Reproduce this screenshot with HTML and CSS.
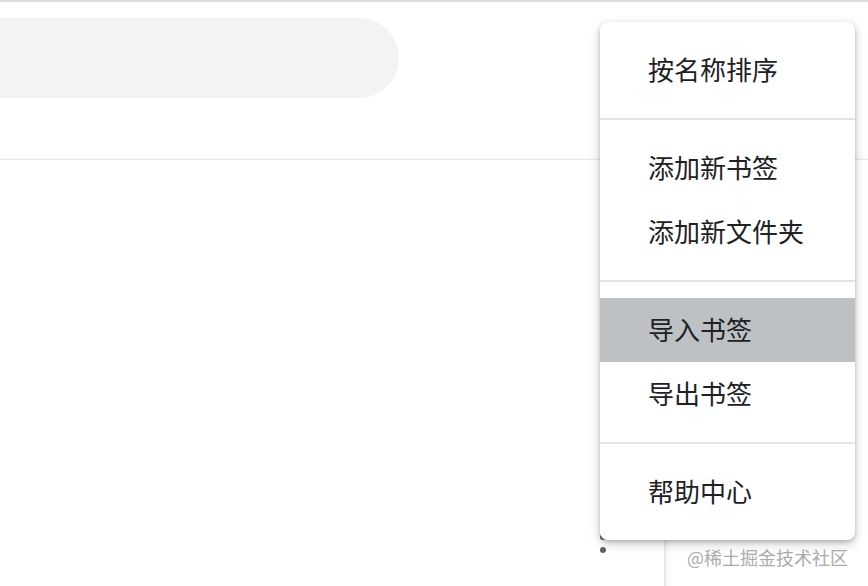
FILE: index.html
```html
<!DOCTYPE html>
<html lang="zh-CN">
<head>
<meta charset="utf-8">
<link rel="stylesheet" href="styles.css">
</head>
<body>
<div class="topline"></div>
<header class="header">
  <div class="search"></div>
</header>
<main class="content"></main>

<div class="kebab">
  <span class="dot"></span>
  <span class="dot"></span>
  <span class="dot"></span>
</div>
<div class="sidepanel"></div>

<div class="menu">
  <div class="section">
    <div class="item">按名称排序</div>
  </div>
  <div class="section">
    <div class="item">添加新书签</div>
    <div class="item">添加新文件夹</div>
  </div>
  <div class="section">
    <div class="item active">导入书签</div>
    <div class="item">导出书签</div>
  </div>
  <div class="section">
    <div class="item">帮助中心</div>
  </div>
</div>

<div class="watermark">@稀土掘金技术社区</div>
</body>
</html>
```
FILE: styles.css
```css
html, body {
  margin: 0;
  padding: 0;
  background: #ffffff;
  width: 868px;
  height: 586px;
  overflow: hidden;
  font-family: "Noto Sans CJK SC", "Noto Sans", sans-serif;
  position: relative;
}

.topline {
  height: 2px;
  background: #dadce0;
}

.header {
  height: 158px;
  padding-top: 16px;
  box-sizing: border-box;
  border-bottom: 1px solid #e6e8ea;
  box-shadow: inset 0 -8px 8px -8px rgba(0, 0, 0, 0.05);
}

.search {
  width: 440px;
  height: 80px;
  margin-left: -41px;
  border-radius: 40px;
  background: #f1f3f4;
}

.content {
  height: 400px;
}

.kebab {
  position: absolute;
  left: 600px;
  top: 521px;
  display: flex;
  flex-direction: column;
  gap: 7px;
}

.dot {
  width: 6px;
  height: 6px;
  border-radius: 50%;
  background: #5f6368;
}

.sidepanel {
  position: absolute;
  left: 664px;
  top: 536px;
  width: 210px;
  height: 60px;
  border-left: 1px solid #e3e3e3;
  box-shadow: inset 6px 0 6px -6px rgba(0, 0, 0, 0.12);
}

.menu {
  position: absolute;
  left: 600px;
  top: 22px;
  width: 255px;
  background: #ffffff;
  border-radius: 8px;
  box-shadow: 0 2px 4px rgba(0, 0, 0, 0.2), 0 4px 12px rgba(0, 0, 0, 0.18);
  overflow: hidden;
}

.section {
  padding: 16px 0;
  border-top: 2px solid #e3e4e6;
}

.section:first-child {
  border-top: none;
}

.item {
  height: 64px;
  box-sizing: border-box;
  padding-bottom: 4px;
  display: flex;
  align-items: center;
  padding-left: 48px;
  font-size: 26px;
  color: #202124;
}

.item.active {
  background: #bdc1c4;
}

.watermark {
  position: absolute;
  left: 687px;
  top: 544px;
  font-size: 18px;
  line-height: 26px;
  color: #ababab;
}
```
